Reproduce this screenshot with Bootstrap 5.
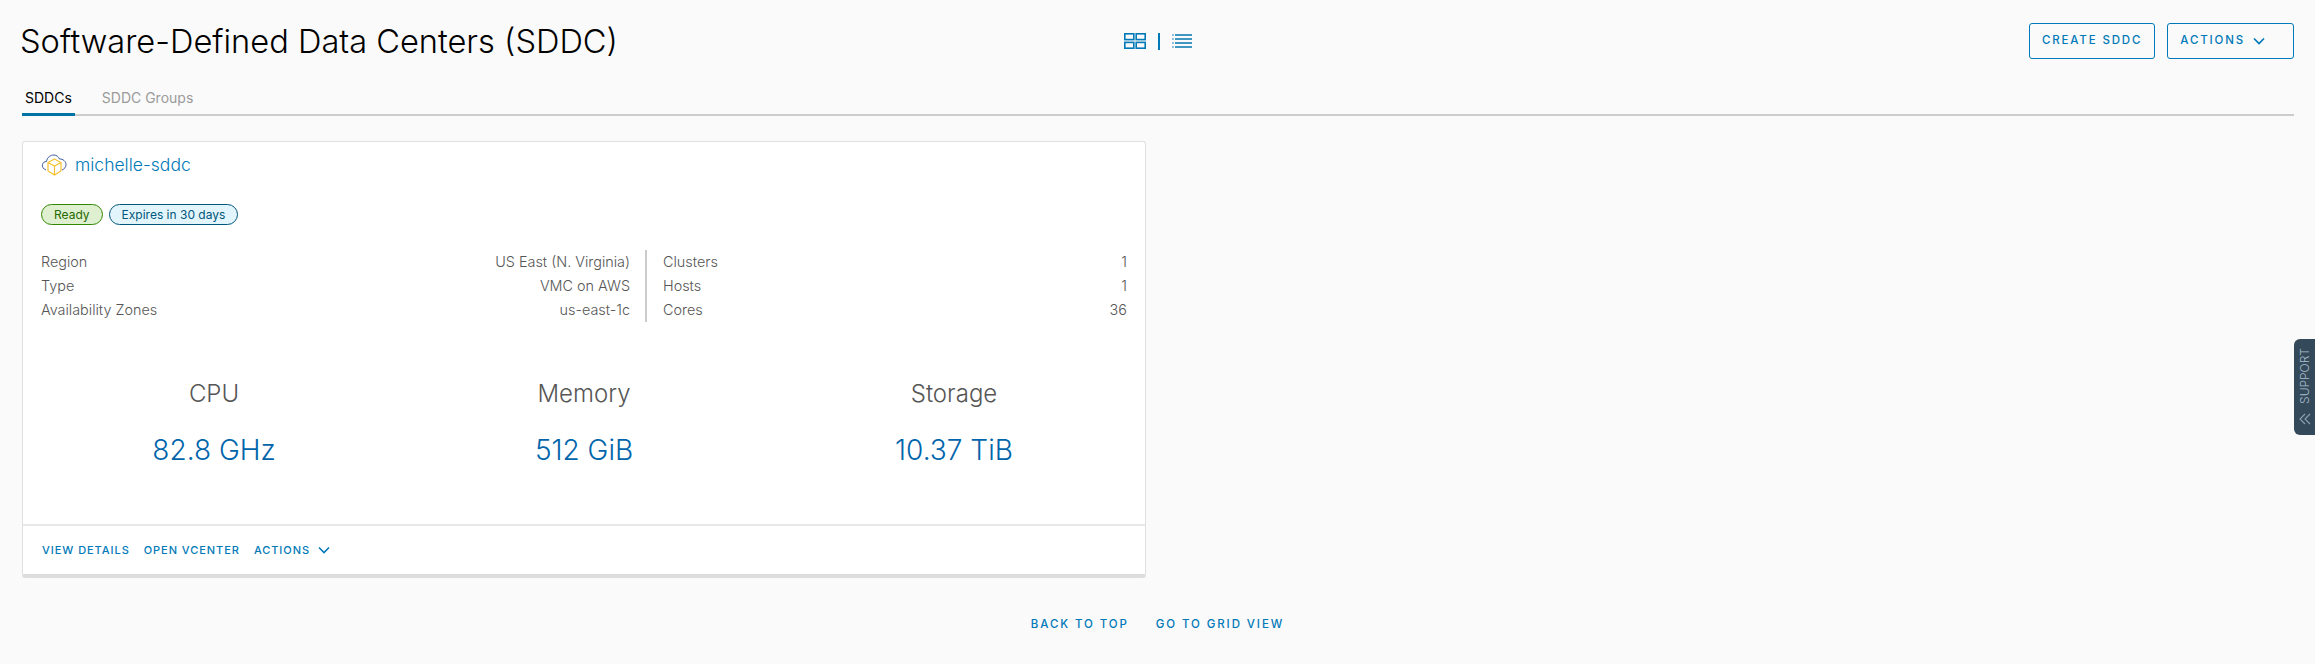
<!doctype html>
<html lang="en">
  <head>
    <meta charset="utf-8">
    <meta name="viewport" content="width=device-width, initial-scale=1">
    <title>Software-Defined Data Centers (SDDC)</title>
    <link href="https://cdn.jsdelivr.net/npm/bootstrap@5.3.2/dist/css/bootstrap.min.css" rel="stylesheet">
    <style>
      body {
        background: #fafafa;
        font-family: "Inter", "Liberation Sans", sans-serif;
        color: #565656;
        overflow: hidden;
      }
      .page-wrap { padding: 23px 21px 0 22px; }
      .page-head {
        display: grid;
        grid-template-columns: 1fr auto 1fr;
        align-items: flex-start;
        height: 60px;
      }
      .page-title {
        font-size: 32.6px;
        font-weight: 300;
        line-height: 36px;
        margin: 0 0 0 -2px;
        color: #000;
        white-space: nowrap;
      }
      .view-switch { height: 36px; gap: 12px; }
      .view-sep { width: 2px; height: 17px; background: #0079b8; }
      .head-btn {
        height: 36px;
        border: 1px solid #0079b8;
        border-radius: 3px;
        color: #0079b8;
        background: transparent;
        font-size: 11.5px;
        font-weight: 500;
        letter-spacing: 1.85px;
        padding: 0 12px;
      }
      .sddc-tabs {
        border-bottom: 2px solid #ccc;
        height: 33px;
        gap: 27px;
      }
      .sddc-tabs .tab-item {
        font-size: 14px;
        color: #9a9a9a;
        height: 33px;
        line-height: 30px;
        white-space: nowrap;
      }
      .sddc-tabs .tab-on {
        color: #000;
        padding: 0 3px;
        border-bottom: 3px solid #0072a3;
      }
      .sddc-card {
        width: 1124px;
        margin-top: 25px;
        height: 437px;
        background: #fff;
        border: 1px solid #e0e0e0;
        border-bottom: 4px solid #ddd;
        border-radius: 3px;
      }
      .card-main { padding: 11px 18px 0 18px; height: 382px; }
      .sddc-name { font-size: 17.5px; line-height: 24px; color: #0079b8; font-weight: 300; text-decoration: none; }
      .status-row { margin-top: 27px; gap: 6px; }
      .status-pill {
        height: 21px;
        border-radius: 11px;
        font-size: 12px;
        line-height: 19px;
        padding: 0 12px;
        border: 1px solid;
      }
      .pill-ready { background: #dff0d0; border-color: #318700; color: #266900; }
      .pill-exp { background: #e3f5fc; border-color: #00567a; color: #00567a; }
      .facts { margin-top: 25px; }
      .facts-col { font-size: 14.4px; line-height: 24px; color: #565656; font-weight: 300; }
      .facts-col:first-child { width: 606px; padding-right: 15px; border-right: 2px solid #ccc; }
      .facts-col:last-child { flex: 1; padding-left: 16px; }
      .metrics { margin: 58px -12px 0 -12px; }
      .metric-box { width: 370px; text-align: center; }
      .metric-name { font-size: 24px; line-height: 28px; font-weight: 300; color: #565656; }
      .metric-value { font-size: 28px; line-height: 32px; font-weight: 300; color: #0065ab; margin-top: 26px; }
      .card-foot {
        border-top: 2px solid #e8e8e8;
        height: 50px;
        padding: 0 0 0 19px;
        gap: 14px;
      }
      .foot-link {
        font-size: 11px;
        font-weight: 500;
        letter-spacing: .95px;
        color: #0079b8;
        text-decoration: none;
        white-space: nowrap;
      }
      .bottom-links { margin-top: 38px; gap: 27px; padding-right: 1px; }
      .bottom-links a {
        font-size: 11.5px;
        font-weight: 500;
        letter-spacing: 1.9px;
        color: #0079b8;
        text-decoration: none;
      }
      .support-tab {
        position: absolute;
        right: 0;
        top: 339px;
        width: 21px;
        height: 96px;
        background: #34495a;
        border-radius: 6px 0 0 6px;
        color: #a9bfd0;
        font-size: 12px;
      }
      .support-label { height: 74px; }
      .support-tab span {
        display: block;
        transform: rotate(-90deg);
        white-space: nowrap;
        line-height: 1;
        font-weight: 300;
      }
    </style>
  </head>
  <body>
    <div class="page-wrap">
      <div class="page-head">
        <h1 class="page-title">Software-Defined Data Centers (SDDC)</h1>
        <div class="view-switch d-flex align-items-center">
          <svg width="22" height="16" viewBox="0 0 22 16" fill="none" stroke="#0079b8" stroke-width="1.6">
            <rect x=".8" y=".8" width="9" height="5.8"/><rect x="12.2" y=".8" width="9" height="5.8"/>
            <rect x=".8" y="9.4" width="9" height="5.8"/><rect x="12.2" y="9.4" width="9" height="5.8"/>
          </svg>
          <div class="view-sep"></div>
          <svg width="20" height="14" viewBox="0 0 20 14" fill="none" stroke="#3f97c2" stroke-width="2">
            <path d="M3 1h17M3 5h17M3 9h17M3 13h17"/>
            <path d="M0 1h2M0 5h2M0 9h2M0 13h2" stroke="#8fc0d9"/>
          </svg>
        </div>
        <div class="d-flex justify-content-end gap-2">
          <button class="head-btn me-1" type="button">CREATE SDDC</button>
          <button class="head-btn d-flex align-items-center" type="button">ACTIONS
            <svg class="ms-2 me-3" width="12" height="8" viewBox="0 0 12 8" fill="none" stroke="#0079b8" stroke-width="1.7"><path d="M1 1.500l5 5 5-5"/></svg>
          </button>
        </div>
      </div>

      <div class="sddc-tabs d-flex">
        <div class="tab-item tab-on">SDDCs</div>
        <div class="tab-item">SDDC Groups</div>
      </div>

      <div class="sddc-card">
        <div class="card-main">
          <div class="d-flex align-items-center gap-2">
            <svg width="26" height="22" viewBox="0 0 26 22" fill="none">
              <path d="M5 16C2.500 15 .8 13 1.500 10.500 2 8.500 3.500 7.500 5.500 7.500 6 3.500 9.500 .8 13 1c2.500.2 4.500 1.500 5.500 4 3.500-.2 6.500 2.500 6.500 5.500 0 2.500-1.500 4.500-4 5.500" stroke="#3d5a9e" stroke-width="1"/>
              <path d="M13.500 5l6.500 3.500v8.500L13.500 21 7 17V8.500z" fill="#fff" stroke="#f5c12e" stroke-width="1.200"/>
              <path d="M7 8.500l6.500 3.500L20 8.500M13.500 12v9" stroke="#f5c12e" stroke-width="1.200"/>
            </svg>
            <a class="sddc-name" href="#">michelle-sddc</a>
          </div>
          <div class="status-row d-flex">
            <div class="status-pill pill-ready">Ready</div>
            <div class="status-pill pill-exp">Expires in 30 days</div>
          </div>
          <div class="facts d-flex">
            <div class="facts-col">
              <div class="d-flex justify-content-between"><span>Region</span><span>US East (N. Virginia)</span></div>
              <div class="d-flex justify-content-between"><span>Type</span><span>VMC on AWS</span></div>
              <div class="d-flex justify-content-between"><span>Availability Zones</span><span>us-east-1c</span></div>
            </div>
            <div class="facts-col">
              <div class="d-flex justify-content-between"><span>Clusters</span><span>1</span></div>
              <div class="d-flex justify-content-between"><span>Hosts</span><span>1</span></div>
              <div class="d-flex justify-content-between"><span>Cores</span><span>36</span></div>
            </div>
          </div>
          <div class="metrics d-flex">
            <div class="metric-box"><div class="metric-name">CPU</div><div class="metric-value">82.8 GHz</div></div>
            <div class="metric-box"><div class="metric-name">Memory</div><div class="metric-value">512 GiB</div></div>
            <div class="metric-box"><div class="metric-name">Storage</div><div class="metric-value">10.37 TiB</div></div>
          </div>
        </div>
        <div class="card-foot d-flex align-items-center">
          <a class="foot-link" href="#">VIEW DETAILS</a>
          <a class="foot-link" href="#">OPEN VCENTER</a>
          <a class="foot-link d-flex align-items-center" href="#">ACTIONS
            <svg class="ms-2" width="12" height="8" viewBox="0 0 12 8" fill="none" stroke="#0079b8" stroke-width="1.600"><path d="M1 1.500l5 5 5-5"/></svg>
          </a>
        </div>
      </div>

      <div class="bottom-links d-flex justify-content-center">
        <a href="#">BACK TO TOP</a>
        <a href="#">GO TO GRID VIEW</a>
      </div>
    </div>

    <div class="support-tab d-flex flex-column align-items-center">
      <div class="support-label d-flex align-items-center justify-content-center"><span>SUPPORT</span></div>
      <svg width="12" height="12" viewBox="0 0 12 12" fill="none" stroke="#8ba3b5" stroke-width="1.100"><path d="M6 1L1 6l5 5M11 1L6 6l5 5"/></svg>
    </div>
    <script src="https://cdn.jsdelivr.net/npm/bootstrap@5.3.2/dist/js/bootstrap.bundle.min.js"></script>
  </body>
</html>
